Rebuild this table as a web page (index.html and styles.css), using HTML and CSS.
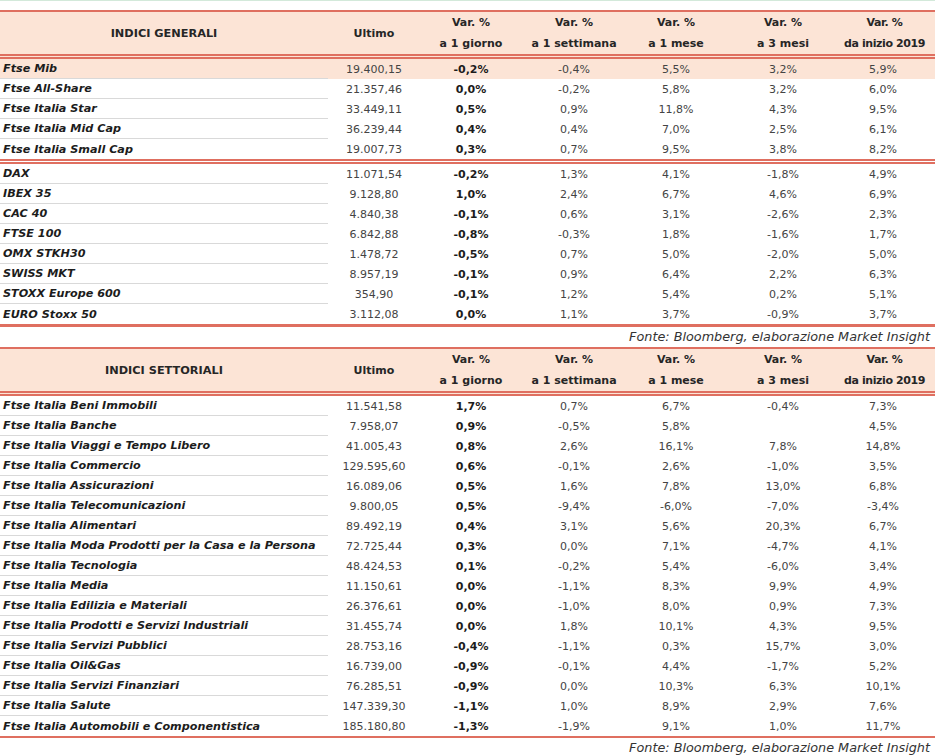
FILE: index.html
```html
<!DOCTYPE html>
<html lang="it">
<head>
<meta charset="utf-8">
<title>Indici</title>
<link rel="stylesheet" href="styles.css">
</head>
<body>
<div class="page">
  <div class="topline"></div>
  <table class="tbl">
    <colgroup><col class="c1"><col class="c2"><col class="c3"><col class="c4"><col class="c5"><col class="c6"><col class="c7"></colgroup>
    <thead>
      <tr>
        <th class="name">INDICI GENERALI</th>
        <th>Ultimo</th>
        <th>Var. %<br>a 1 giorno</th>
        <th>Var. %<br>a 1 settimana</th>
        <th>Var. %<br>a 1 mese</th>
        <th>Var. %<br>a 3 mesi</th>
        <th class="last">Var. %<br>da inizio 2019</th>
      </tr>
    </thead>
    <tbody>
      <tr class="hl"><td>Ftse Mib</td><td>19.400,15</td><td>-0,2%</td><td>-0,4%</td><td>5,5%</td><td>3,2%</td><td>5,9%</td></tr>
      <tr><td>Ftse All-Share</td><td>21.357,46</td><td>0,0%</td><td>-0,2%</td><td>5,8%</td><td>3,2%</td><td>6,0%</td></tr>
      <tr><td>Ftse Italia Star</td><td>33.449,11</td><td>0,5%</td><td>0,9%</td><td>11,8%</td><td>4,3%</td><td>9,5%</td></tr>
      <tr><td>Ftse Italia Mid Cap</td><td>36.239,44</td><td>0,4%</td><td>0,4%</td><td>7,0%</td><td>2,5%</td><td>6,1%</td></tr>
      <tr class="dbl"><td>Ftse Italia Small Cap</td><td>19.007,73</td><td>0,3%</td><td>0,7%</td><td>9,5%</td><td>3,8%</td><td>8,2%</td></tr>
      <tr><td>DAX</td><td>11.071,54</td><td>-0,2%</td><td>1,3%</td><td>4,1%</td><td>-1,8%</td><td>4,9%</td></tr>
      <tr><td>IBEX 35</td><td>9.128,80</td><td>1,0%</td><td>2,4%</td><td>6,7%</td><td>4,6%</td><td>6,9%</td></tr>
      <tr><td>CAC 40</td><td>4.840,38</td><td>-0,1%</td><td>0,6%</td><td>3,1%</td><td>-2,6%</td><td>2,3%</td></tr>
      <tr><td>FTSE 100</td><td>6.842,88</td><td>-0,8%</td><td>-0,3%</td><td>1,8%</td><td>-1,6%</td><td>1,7%</td></tr>
      <tr><td>OMX STKH30</td><td>1.478,72</td><td>-0,5%</td><td>0,7%</td><td>5,0%</td><td>-2,0%</td><td>5,0%</td></tr>
      <tr><td>SWISS MKT</td><td>8.957,19</td><td>-0,1%</td><td>0,9%</td><td>6,4%</td><td>2,2%</td><td>6,3%</td></tr>
      <tr><td>STOXX Europe 600</td><td>354,90</td><td>-0,1%</td><td>1,2%</td><td>5,4%</td><td>0,2%</td><td>5,1%</td></tr>
      <tr class="end thick"><td>EURO Stoxx 50</td><td>3.112,08</td><td>0,0%</td><td>1,1%</td><td>3,7%</td><td>-0,9%</td><td>3,7%</td></tr>
    </tbody>
  </table>
  <div class="fonte f1">Fonte: Bloomberg, elaborazione Market Insight</div>
  <table class="tbl">
    <colgroup><col class="c1"><col class="c2"><col class="c3"><col class="c4"><col class="c5"><col class="c6"><col class="c7"></colgroup>
    <thead>
      <tr>
        <th class="name">INDICI SETTORIALI</th>
        <th>Ultimo</th>
        <th>Var. %<br>a 1 giorno</th>
        <th>Var. %<br>a 1 settimana</th>
        <th>Var. %<br>a 1 mese</th>
        <th>Var. %<br>a 3 mesi</th>
        <th class="last">Var. %<br>da inizio 2019</th>
      </tr>
    </thead>
    <tbody>
      <tr><td>Ftse Italia Beni Immobili</td><td>11.541,58</td><td>1,7%</td><td>0,7%</td><td>6,7%</td><td>-0,4%</td><td>7,3%</td></tr>
      <tr><td>Ftse Italia Banche</td><td>7.958,07</td><td>0,9%</td><td>-0,5%</td><td>5,8%</td><td></td><td>4,5%</td></tr>
      <tr><td>Ftse Italia Viaggi e Tempo Libero</td><td>41.005,43</td><td>0,8%</td><td>2,6%</td><td>16,1%</td><td>7,8%</td><td>14,8%</td></tr>
      <tr><td>Ftse Italia Commercio</td><td>129.595,60</td><td>0,6%</td><td>-0,1%</td><td>2,6%</td><td>-1,0%</td><td>3,5%</td></tr>
      <tr><td>Ftse Italia Assicurazioni</td><td>16.089,06</td><td>0,5%</td><td>1,6%</td><td>7,8%</td><td>13,0%</td><td>6,8%</td></tr>
      <tr><td>Ftse Italia Telecomunicazioni</td><td>9.800,05</td><td>0,5%</td><td>-9,4%</td><td>-6,0%</td><td>-7,0%</td><td>-3,4%</td></tr>
      <tr><td>Ftse Italia Alimentari</td><td>89.492,19</td><td>0,4%</td><td>3,1%</td><td>5,6%</td><td>20,3%</td><td>6,7%</td></tr>
      <tr><td>Ftse Italia Moda Prodotti per la Casa e la Persona</td><td>72.725,44</td><td>0,3%</td><td>0,0%</td><td>7,1%</td><td>-4,7%</td><td>4,1%</td></tr>
      <tr><td>Ftse Italia Tecnologia</td><td>48.424,53</td><td>0,1%</td><td>-0,2%</td><td>5,4%</td><td>-6,0%</td><td>3,4%</td></tr>
      <tr><td>Ftse Italia Media</td><td>11.150,61</td><td>0,0%</td><td>-1,1%</td><td>8,3%</td><td>9,9%</td><td>4,9%</td></tr>
      <tr><td>Ftse Italia Edilizia e Materiali</td><td>26.376,61</td><td>0,0%</td><td>-1,0%</td><td>8,0%</td><td>0,9%</td><td>7,3%</td></tr>
      <tr><td>Ftse Italia Prodotti e Servizi Industriali</td><td>31.455,74</td><td>0,0%</td><td>1,8%</td><td>10,1%</td><td>4,3%</td><td>9,5%</td></tr>
      <tr><td>Ftse Italia Servizi Pubblici</td><td>28.753,16</td><td>-0,4%</td><td>-1,1%</td><td>0,3%</td><td>15,7%</td><td>3,0%</td></tr>
      <tr><td>Ftse Italia Oil&amp;Gas</td><td>16.739,00</td><td>-0,9%</td><td>-0,1%</td><td>4,4%</td><td>-1,7%</td><td>5,2%</td></tr>
      <tr><td>Ftse Italia Servizi Finanziari</td><td>76.285,51</td><td>-0,9%</td><td>0,0%</td><td>10,3%</td><td>6,3%</td><td>10,1%</td></tr>
      <tr><td>Ftse Italia Salute</td><td>147.339,30</td><td>-1,1%</td><td>1,0%</td><td>8,9%</td><td>2,9%</td><td>7,6%</td></tr>
      <tr class="end"><td>Ftse Italia Automobili e Componentistica</td><td>185.180,80</td><td>-1,3%</td><td>-1,9%</td><td>9,1%</td><td>1,0%</td><td>11,7%</td></tr>
    </tbody>
  </table>
  <div class="fonte f2">Fonte: Bloomberg, elaborazione Market Insight</div>
</div>
</body>
</html>
```
FILE: styles.css
```css
html, body {
  margin: 0;
  padding: 0;
  background: #ffffff;
}
.page {
  width: 935px;
  font-family: "DejaVu Sans", Verdana, sans-serif;
  color: #333333;
}
.topline {
  height: 1px;
  background: #d3e9da;
  margin-bottom: 9px;
}
.tbl {
  width: 935px;
  border-collapse: separate;
  border-spacing: 0;
  table-layout: fixed;
}
.c1 { width: 328px; }
.c2 { width: 92px; }
.c3 { width: 102px; }
.c4 { width: 104px; }
.c5 { width: 100px; }
.c6 { width: 114px; }
.c7 { width: 95px; }
.tbl th {
  background: #fce4d6;
  border-top: 2px solid #df6f60;
  border-bottom: 5px double #df6f60;
  height: 38px;
  padding: 0;
  font-size: 11px;
  font-weight: 700;
  line-height: 21px;
  color: #262626;
  text-align: center;
  vertical-align: middle;
  white-space: nowrap;
}
.tbl th.name { font-size: 11.3px; }
.tbl th.last {
  padding-right: 6px;
  letter-spacing: -0.4px;
}
.tbl td {
  padding: 0;
  height: 20px;
  line-height: 19px;
  font-size: 11px;
  text-align: center;
  white-space: nowrap;
  color: #444444;
}
.tbl td:first-child {
  text-align: left;
  padding-left: 3px;
  font-weight: 700;
  font-style: italic;
  font-size: 11.2px;
  color: #1c1c1c;
  border-bottom: 1px solid #d9d9d9;
  height: 19px;
}
.tbl td:nth-child(3) {
  font-weight: 700;
  color: #1c1c1c;
}
.tbl td:last-child { padding-right: 9px; }
.tbl tr.hl td { background: #fce4d6; }
.tbl tr.dbl td,
.tbl tr.dbl td:first-child {
  border-bottom: 5px double #df6f60;
}
.tbl tr.end td,
.tbl tr.end td:first-child {
  border-bottom: 2px solid #df6f60;
}
.tbl tr.end.thick td,
.tbl tr.end.thick td:first-child {
  border-bottom: 3px solid #df6f60;
}
.fonte {
  text-align: right;
  font-style: italic;
  font-size: 12.8px;
  color: #333333;
  padding-right: 5px;
}
.f1 {
  height: 20px;
  line-height: 20px;
}
.f2 {
  height: 20px;
  line-height: 20px;
}
```
